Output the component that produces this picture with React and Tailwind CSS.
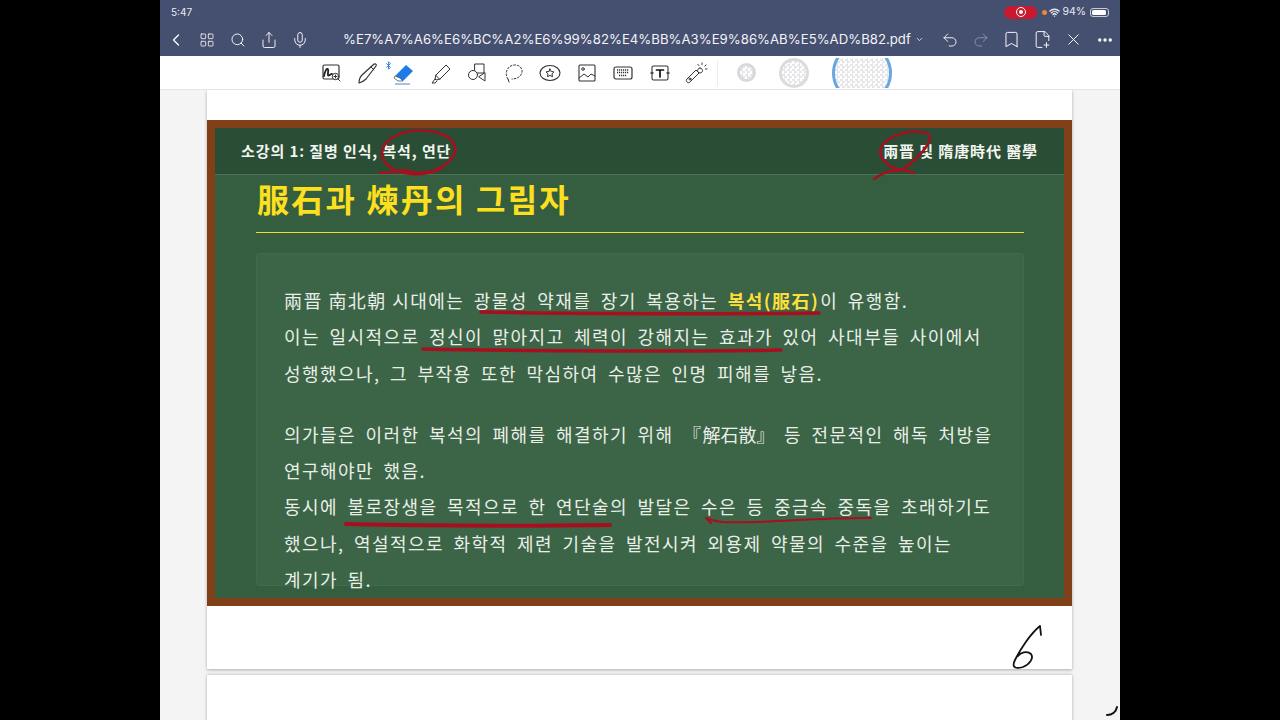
import React from 'react';
import { ChevronLeft, LayoutGrid, Search, Share, Mic, Undo2, Redo2, Bookmark, FilePlus2, X, Ellipsis, ChevronDown, Wifi, Bluetooth } from 'lucide-react';

const kr = '[font-family:"Noto_Sans_CJK_KR","Noto_Sans_CJK_TC",sans-serif]';

function ToolIcon({ children }) {
  return (
    <div className="w-[36.5px] h-full flex items-center justify-center shrink-0">
      <svg width="26" height="26" viewBox="0 0 26 26" fill="none" stroke="#333" strokeWidth="1" strokeLinecap="round" strokeLinejoin="round">
        {children}
      </svg>
    </div>
  );
}

function NavCell({ children }) {
  return <div className="w-[31px] flex items-center justify-center shrink-0">{children}</div>;
}

function Toolbar() {
  return (
    <div className="h-[34px] shrink-0 bg-white border-b border-[#e4e4e6] flex items-center pl-[153px] overflow-hidden">
      <ToolIcon>
        <rect x="5" y="5" width="16" height="14" rx="1.5" strokeWidth="1.2" />
        <path d="M6 16c2-9 5-9 4-3s3 0 4 1" strokeWidth="1.8" stroke="#222" />
        <circle cx="17.5" cy="16.5" r="3.2" fill="#fff" />
        <path d="M20 19l2 2M16 16.500h3M17.500 15v3" />
      </ToolIcon>
      <ToolIcon>
        <path d="M4 23c0-4 1-6 3-8L18 5c2-2 4-1 3 1L11 19c-2 2-4 3-7 4z" strokeWidth="1.2" />
        <path d="M16 7l3 3" />
      </ToolIcon>
      <div className="w-[36.500px] h-full flex items-center justify-center shrink-0 relative">
        <Bluetooth size={9} strokeWidth={2.500} className="absolute left-[-2px] top-[5px] text-[#2f7de1]" />
        <svg width="26" height="26" viewBox="0 0 26 26" fill="none" strokeLinejoin="round">
          <path d="M4 16L15 5l7 6-10 10z" fill="#1f7be6" />
          <path d="M4 16l-1 2 4 3h5l-3-3z" fill="#fff" stroke="#555" strokeWidth="0.8" />
          <path d="M4 24h15" stroke="#7da8d8" strokeWidth="1.4" />
        </svg>
      </div>
      <ToolIcon>
        <path d="M8 15L18 5l4 4-10 10z" strokeWidth="1" />
        <path d="M8 15l-1 4 1 1 4-1M7 19l-3 4h3l2-2" />
      </ToolIcon>
      <ToolIcon>
        <rect x="11" y="4" width="9" height="9" />
        <circle cx="9" cy="15" r="4.500" fill="#fff" />
        <path d="M21 13v8l-6-4z" fill="#fff" />
      </ToolIcon>
      <ToolIcon>
        <path d="M7 19C3 14 6 5 14 5c7 0 9 7 5 11-2 2-5 3-8 3" strokeDasharray="1.800 1.800" />
        <path d="M7 19l1 3" />
      </ToolIcon>
      <ToolIcon>
        <ellipse cx="13" cy="13" rx="10" ry="7.500" strokeWidth="1.1" />
        <path d="M13 9l1.200 2.500 2.800.4-2 2 .5 2.800-2.500-1.300-2.500 1.300.5-2.800-2-2 2.800-.4z" />
      </ToolIcon>
      <ToolIcon>
        <rect x="5" y="5" width="16" height="16" rx="1" strokeWidth="1.1" />
        <circle cx="9" cy="9" r="1.300" />
        <path d="M5 18l5-4 4 3 3-3 4 2" />
      </ToolIcon>
      <ToolIcon>
        <rect x="4" y="7" width="18" height="12" rx="2" strokeWidth="1.200" />
        <path d="M7 10h12M7 12.500h12M9 15.500h8" strokeWidth="1.500" strokeDasharray="1.200 0.800" strokeLinecap="butt" />
      </ToolIcon>
      <ToolIcon>
        <rect x="5" y="6" width="16" height="14" rx="1.500" strokeWidth="1.100" />
        <path d="M9.500 10h7M13 10v7" strokeWidth="1.700" stroke="#111" />
        <path d="M4 13h2M20 13h2" strokeWidth="1.500" />
      </ToolIcon>
      <ToolIcon>
        <path d="M4 19l9-9 3 3-9 9c-1 1-2 1-3 0s-1-2 0-3z" />
        <circle cx="7" cy="19" r="1" />
        <path d="M17 8a2.500 2.500 0 1 0 .1 0M19 3v1.500M23 5l-1.200 1M24 9h-1.500M15 4.500l.8 1" />
      </ToolIcon>
      <div className="w-px h-[26px] bg-[#ececee] ml-[2px] shrink-0" />
      <Swatch className="w-[19px] h-[19px] border-[3px] border-[#d9d9db] ml-[19px]" />
      <Swatch className="w-[30px] h-[30px] border-[3px] border-[#dcdcde] ml-[23px]" />
      <div className="ml-[23px] w-[60px] h-[30px] shrink-0 overflow-hidden flex items-center">
        <Swatch className="w-[60px] h-[60px] border-[3px] border-[#6aa6e2]" />
      </div>
    </div>
  );
}

function Swatch({ className }) {
  return (
    <div className={`shrink-0 rounded-full bg-[repeating-conic-gradient(#e6e6e8_0%_25%,#ffffff_0%_50%)] bg-[length:5px_5px] ${className}`} />
  );
}

function BodyLine({ children, className = '' }) {
  return <div className={`h-[36.400px] leading-[36.400px] whitespace-nowrap ${className}`}>{children}</div>;
}

function Slide() {
  return (
    <div className="mt-[30px] border-[8px] border-[#7f3f17] bg-[#355e40] h-[486px] flex flex-col overflow-hidden">
      <div className={`h-[47px] shrink-0 bg-[#2a4d35] border-b border-[#4c7257] flex items-center justify-between pl-[26px] pr-[26px] text-[15px] font-bold tracking-[0.900px] text-[#f2f5f0] ${kr}`}>
        <span>소강의 1: 질병 인식, 복석, 연단</span>
        <span>兩晋 및 隋唐時代 醫學</span>
      </div>
      <div className="pl-[41px] pr-[40px] flex-1 flex flex-col">
        <h1 className={`h-[58px] leading-[46px] pl-[1px] border-b-[1.500px] border-[#ecdf2c] text-[32px] font-bold tracking-[2.200px] text-[#fcdf1f] ${kr}`}>
          服石과 煉丹의 그림자
        </h1>
        <div className={`mt-[20px] h-[333px] rounded-[4px] bg-white/[0.04] border border-white/[0.04] pl-[27px] pt-[28px] text-[18px] font-normal tracking-[1.450px] [word-spacing:4px] text-[#e9efe7] ${kr}`}>
          <BodyLine>
            <span className="[word-spacing:0px]">兩晋 南北朝 </span>시대에는 광물성 약재를 장기 복용하는 <span className="font-bold text-[#fcdf3a]">복석(服石)</span><span className="ml-[1px]">이 유행함.</span>
          </BodyLine>
          <BodyLine>이는 일시적으로 정신이 맑아지고 체력이 강해지는 효과가 있어 사대부들 사이에서</BodyLine>
          <BodyLine>성행했으나, 그 부작용 또한 막심하여 수많은 인명 피해를 낳음.</BodyLine>
          <BodyLine className="mt-[24.400px]">
            의가들은 이러한 복석의 폐해를 해결하기 위해 『<span className="tracking-[0px]">解石散』</span> 등 전문적인 해독 처방을
          </BodyLine>
          <BodyLine>연구해야만 했음.</BodyLine>
          <BodyLine>동시에 불로장생을 목적으로 한 연단술의 발달은 수은 등 중금속 중독을 초래하기도</BodyLine>
          <BodyLine>했으나, 역설적으로 화학적 제련 기술을 발전시켜 외용제 약물의 수준을 높이는</BodyLine>
          <BodyLine>계기가 됨.</BodyLine>
        </div>
      </div>
    </div>
  );
}

export default function App() {
  return (
    <div className="relative w-[1280px] h-[720px] bg-black overflow-hidden font-['Inter',sans-serif]">
      <div className="ml-[160px] w-[960px] h-[720px] flex flex-col bg-[#f4f4f5]">
        <div className="h-[56px] shrink-0 bg-[#454f70] text-white">
          <div className="h-[24px] flex items-center justify-between pl-[11px] pr-[11px] text-[10px] text-[#e8eaf0]">
            <span>5:47</span>
            <div className="flex items-center">
              <div className="w-[33px] h-[13px] rounded-full bg-[#c8192f] flex items-center justify-center">
                <div className="w-[10px] h-[10px] rounded-full border border-white flex items-center justify-center">
                  <div className="w-[4px] h-[4px] rounded-full bg-white" />
                </div>
              </div>
              <div className="w-[5px] h-[5px] rounded-full bg-[#e8893a] ml-[5px]" />
              <Wifi size={11} strokeWidth={3} className="ml-[2px]" />
              <span className="ml-[2px] text-[10.500px]">94%</span>
              <div className="ml-[4px] w-[19px] h-[9px] rounded-[3px] border border-[#c9ccd6] p-px">
                <div className="w-[90%] h-full rounded-[1.500px] bg-white" />
              </div>
            </div>
          </div>
          <div className="h-[31px] flex items-center">
            <NavCell><ChevronLeft size={20} strokeWidth={1.500} /></NavCell>
            <NavCell><LayoutGrid size={16} strokeWidth={1.200} /></NavCell>
            <NavCell><Search size={16} strokeWidth={1.400} /></NavCell>
            <NavCell><Share size={18} strokeWidth={1.200} /></NavCell>
            <NavCell><Mic size={18} strokeWidth={1.200} /></NavCell>
            <span className="ml-[28px] text-[13.200px] whitespace-nowrap text-[#f2f3f7]">%E7%A7%A6%E6%BC%A2%E6%99%82%E4%BB%A3%E9%86%AB%E5%AD%B82.pdf</span>
            <ChevronDown size={9} strokeWidth={2} className="ml-[4px] shrink-0" />
            <div className="ml-auto flex items-center">
              <NavCell><Undo2 size={18} strokeWidth={1.200} /></NavCell>
              <NavCell><Redo2 size={18} strokeWidth={1.200} className="text-[#8e95ad]" /></NavCell>
              <NavCell><Bookmark size={19} strokeWidth={1.200} /></NavCell>
              <NavCell><FilePlus2 size={19} strokeWidth={1.200} /></NavCell>
              <NavCell><X size={19} strokeWidth={1.200} /></NavCell>
              <NavCell><Ellipsis size={18} strokeWidth={2.500} /></NavCell>
            </div>
          </div>
        </div>
        <Toolbar />
        <div className="flex-1 overflow-hidden pl-[47px]">
          <div className="w-[865px] h-[579px] bg-white shadow-[0_1px_3px_rgba(0,0,0,0.3)] overflow-hidden">
            <Slide />
          </div>
          <div className="w-[865px] h-[60px] mt-[6px] bg-white shadow-[0_0_3px_rgba(0,0,0,0.3)]" />
        </div>
      </div>
      {/* pen annotations over the page */}
      <svg className="absolute inset-0 pointer-events-none" width="1280" height="720" viewBox="0 0 1280 720" fill="none" strokeLinecap="round" strokeLinejoin="round">
        <g stroke="#a80f1e">
          <path d="M380 173C392 172 398 172 405 170C420 176 440 172 450 160C462 148 452 134 430 131C408 128 388 136 383 148C378 162 392 172 412 174C425 175 435 172 442 168" strokeWidth="2.500" />
          <path d="M874 179C880 175 885 172 891 171C897 169 906 170 914 173M904 170C892 169 882 163 880 152C880 143 892 136 904 133C918 130 930 132 930 138C929 146 918 158 906 167C902 170 898 171 892 171" strokeWidth="2.500" />
          <path d="M481 312C560 314 740 314 819 313" strokeWidth="3.500" />
          <path d="M423 349C520 351 700 352 781 350" strokeWidth="3.500" />
          <path d="M346 524C430 526 530 526 610 525" strokeWidth="4" />
          <path d="M871 518C820 517 760 524 722 522C715 521 710 520 706 518M706 518L711 523" strokeWidth="2" />
        </g>
        <path d="M1040 626C1030 634 1020 650 1015 660C1011 668 1016 669 1023 667C1030 664 1034 658 1031 654C1027 650 1020 653 1018 656M1040 626L1041 635" stroke="#111" strokeWidth="1.800" />
        <path d="M1107 715C1112 715 1116 712 1117 707" stroke="#111" strokeWidth="2" />
      </svg>
    </div>
  );
}
